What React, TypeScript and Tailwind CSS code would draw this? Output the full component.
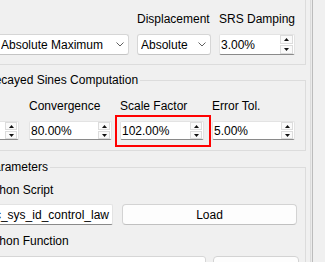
import React from "react";

const Tri = ({ down }: { down?: boolean }) => (
  <svg width="5" height="3" viewBox="0 0 5 3">
    <path d={down ? "M0 0 L5 0 L2.5 3 Z" : "M0 3 L2.5 0 L5 3 Z"} fill="#111" />
  </svg>
);

function Spin({ value, tall }: { value: string; tall?: boolean }) {
  return (
    <div
      className={
        tall
          ? "flex items-center bg-white border border-[#e3e3e3] border-b-[#8a8a8a] rounded-[2px] h-[21px]"
          : "flex items-center bg-white border border-[#e3e3e3] border-b-[#8a8a8a] rounded-[2px] h-[19px]"
      }
    >
      <span className="flex-1 pl-[1px] whitespace-nowrap overflow-hidden">{value}</span>
      <div className="flex flex-col gap-[1px] mr-[1px]">
        <div
          className={
            tall
              ? "w-[13px] h-[9px] border border-[#dcdcdc] bg-[#fafafa] flex items-center justify-center"
              : "w-[12px] h-[8px] border border-[#dcdcdc] bg-[#fafafa] flex items-center justify-center"
          }
        >
          <Tri />
        </div>
        <div
          className={
            tall
              ? "w-[13px] h-[9px] border border-[#dcdcdc] bg-[#fafafa] flex items-center justify-center"
              : "w-[12px] h-[8px] border border-[#dcdcdc] bg-[#fafafa] flex items-center justify-center"
          }
        >
          <Tri down />
        </div>
      </div>
    </div>
  );
}

function Combo({ value }: { value: string }) {
  return (
    <div className="flex items-center h-[21px] bg-white border border-[#d6d6d6] border-b-[#c4c4c4] rounded-[3px] pl-[3px] pr-[4px]">
      <span className="flex-1 whitespace-nowrap overflow-hidden">{value}</span>
      <svg width="8" height="5" viewBox="0 0 8 5">
        <polyline points="0.5,0.5 4,4 7.5,0.5" fill="none" stroke="#606060" strokeWidth="1" />
      </svg>
    </div>
  );
}

function TitleRow({ title }: { title: string }) {
  return (
    <div className="flex h-[16px]">
      <div className="w-[6px] h-[8px] self-end border-t border-l border-[#dcdcdc]" />
      <span className="px-[2px] whitespace-nowrap">{title}</span>
      <div className="flex-1 h-[8px] self-end border-t border-r border-[#dcdcdc]" />
    </div>
  );
}

export default function App() {
  return (
    <div className="w-[325px] h-[262px] overflow-hidden bg-[#f0f0f0] flex font-['Liberation_Sans',Arial,sans-serif] text-[12px] leading-[16px] text-black">
      <div className="w-[310px] h-full overflow-hidden shrink-0">
        <div className="ml-[-22px] w-[328px] flex flex-col">
          {/* Group 1 */}
          <div className="border-x border-b border-[#dcdcdc] mt-[-20px] pt-[31px] pb-[9px] pr-[10px] flex justify-end gap-[8px]">
            <div className="flex flex-col gap-[7px] w-[132px]">
              <div className="h-[16px]" />
              <Combo value="Absolute Maximum" />
            </div>
            <div className="flex flex-col gap-[7px] w-[74px]">
              <span className="h-[16px] whitespace-nowrap">Displacement</span>
              <Combo value="Absolute" />
            </div>
            <div className="flex flex-col gap-[7px] w-[76px]">
              <span className="h-[16px] whitespace-nowrap">SRS Damping</span>
              <Spin value="3.00%" tall />
            </div>
          </div>

          {/* Group 2 */}
          <div className="mt-[7px] flex flex-col">
            <TitleRow title="Decayed Sines Computation" />
            <div className="border-x border-b border-[#dcdcdc] pt-[10px] pb-[10px] pl-[3px] pr-[10px] flex">
              <div className="flex flex-col gap-[7px] w-[37px] mr-[10px]">
                <div className="h-[16px]" />
                <Spin value="" />
              </div>
              <div className="flex flex-col gap-[7px] w-[83px] mr-[8px]">
                <span className="h-[16px] whitespace-nowrap">Convergence</span>
                <Spin value="80.00%" />
              </div>
              <div className="flex flex-col gap-[7px] w-[84px] mr-[8px]">
                <span className="h-[16px] whitespace-nowrap">Scale Factor</span>
                <div className="relative">
                  <Spin value="102.00%" />
                  <div className="absolute left-[-5px] top-[-6px] w-[96px] h-[32px] border-2 border-[#ff0000]" />
                </div>
              </div>
              <div className="flex flex-col gap-[7px] w-[83px]">
                <span className="h-[16px] whitespace-nowrap">Error Tol.</span>
                <Spin value="5.00%" />
              </div>
            </div>
          </div>

          {/* Group 3 */}
          <div className="mt-[8px] flex flex-col">
            <TitleRow title="Parameters" />
            <div className="border-x border-[#dcdcdc] pt-[7px] pl-[3px] flex flex-col h-[120px]">
              <span className="h-[16px] whitespace-nowrap">Python Script</span>
              <div className="flex mt-[6px]">
                <div className="w-[131px] h-[21px] bg-white border border-[#e3e3e3] border-b-[#8a8a8a] rounded-[2px] flex items-center justify-end overflow-hidden pr-[3px]">
                  <span className="whitespace-nowrap">hvac_sys_id_control_law</span>
                </div>
                <div className="ml-[9px] w-[175px] h-[21px] bg-[#fdfdfd] border border-[#d3d3d3] border-b-[#c0c0c0] rounded-[4px] flex items-center justify-center">
                  Load
                </div>
              </div>
              <span className="h-[16px] mt-[8px] whitespace-nowrap">Python Function</span>
              <div className="flex mt-[7px]">
                <div className="w-[224px] h-[21px] bg-white border border-[#d6d6d6] rounded-[3px] flex items-center pl-[3px]">
                  <span className="whitespace-nowrap">control_law</span>
                </div>
                <div className="ml-[7px] w-[86px] h-[21px] bg-[#fdfdfd] border border-[#d3d3d3] rounded-[4px] flex items-center justify-center">
                  Refresh
                </div>
              </div>
            </div>
          </div>
        </div>
      </div>
      <div className="w-px h-full bg-[#dcdcdc]" />
      <div className="w-px h-full bg-[#ebebeb]" />
      <div className="w-px h-full bg-[#bcbcbc]" />
    </div>
  );
}
